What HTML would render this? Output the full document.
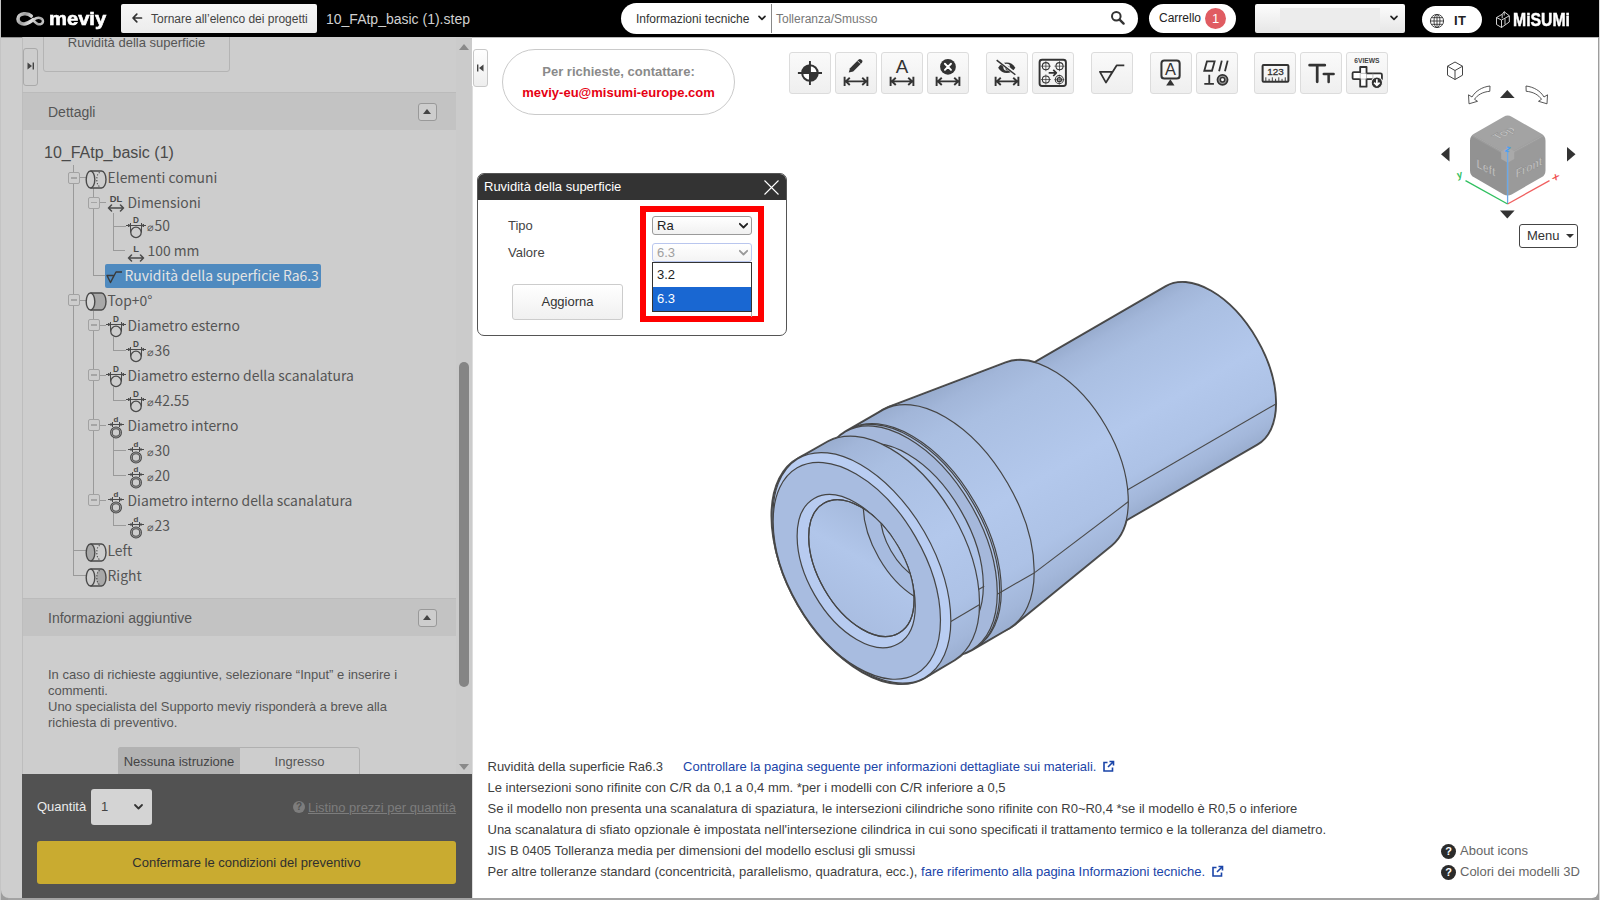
<!DOCTYPE html>
<html lang="it">
<head>
<meta charset="utf-8">
<title>meviy</title>
<style>
*{box-sizing:border-box;margin:0;padding:0}
html,body{width:1600px;height:900px;overflow:hidden;background:#9d9d9d}
body{font-family:"Liberation Sans",sans-serif;font-size:12px;color:#333;position:relative}
.abs{position:absolute}
#hdr{position:absolute;left:1px;top:0;width:1598px;height:37px;background:#000}
#hdr .t{position:absolute;white-space:nowrap}
#edgeL{position:absolute;left:0;top:0;width:1px;height:900px;background:#c4c4c4}
#edgeR{position:absolute;left:1598px;top:37px;width:1px;height:855px;background:#9d9d9d}
#edgeR2{position:absolute;left:1599px;top:0;width:1px;height:900px;background:#d8d8d8}
#edgeB{position:absolute;left:8px;top:898px;width:1584px;height:2px;background:#a3a3a3}
#strip{position:absolute;left:1px;top:37px;width:21px;height:861px;background:#cecece;border-bottom-left-radius:8px}
#left{z-index:2;position:absolute;left:22px;top:37px;width:450px;height:737px;background:#cdcdcd;overflow:hidden}
#foot{z-index:2;position:absolute;left:22px;top:774px;width:450px;height:124px;background:#525252}
#main{position:absolute;left:471px;top:37px;width:1127px;height:861px;background:#fff;border-bottom-right-radius:6px}
.tr{font-family:"Noto Sans CJK JP","Liberation Sans",sans-serif;line-height:20px;white-space:nowrap}
.sec{position:absolute;left:1px;width:434px;height:37px;background:#c3c3c3;color:#555;font-size:14px;line-height:38px;padding-left:25px}
.colbtn{position:absolute;left:395px;top:10px;width:19px;height:18px;border:1px solid #999;border-radius:3px;background:#cdcdcd}
.colbtn:after{content:"";position:absolute;left:4px;top:5px;border:4.5px solid transparent;border-bottom:5px solid #444;border-top:0}
.tb{position:absolute;top:15px;width:42px;height:42px;border:1px solid #dcdcdc;border-radius:3px;background:linear-gradient(#fafafa,#efefef)}
.tb svg{position:absolute;left:-1px;top:-1px}
.info{position:absolute;left:16.500px;white-space:nowrap;font-size:13px;color:#404040;line-height:14px}
.info a{color:#1a44a8;text-decoration:none}
</style>
</head>
<body>
<div id="edgeL"></div>
<div id="hdr">
<svg class="abs" style="left:14px;top:10px" width="32" height="18" viewBox="15 10 32 18">
<defs><linearGradient id="lg1" gradientUnits="userSpaceOnUse" x1="16" y1="12" x2="44" y2="26"><stop offset="0" stop-color="#e6e6e6"/><stop offset=".3" stop-color="#9c9c9c"/><stop offset=".55" stop-color="#e2e2e2"/><stop offset=".8" stop-color="#a8a8a8"/><stop offset="1" stop-color="#dcdcdc"/></linearGradient></defs>
<path d="M31.200 16C29.500 14.200 26.800 13.500 24 13.800C20.200 14.200 18 16.500 18 19C18 22 20.800 24.100 24.200 24C28 23.900 30.500 21.500 33.500 19.600" fill="none" stroke="url(#lg1)" stroke-width="3.600" stroke-linecap="round"/>
<path d="M33.500 19.600C36 18 38.600 17.500 40.600 18.200C42.900 19 43.400 21 42.600 22.600C41.600 24.500 39 24.800 37 23.600C35.800 22.900 34.800 22 34 21.200" fill="none" stroke="url(#lg1)" stroke-width="2.500" stroke-linecap="round"/>
</svg>
<div class="t" style="left:47.500px;top:5px;font-weight:bold;font-size:18px;line-height:28px;color:#fff;-webkit-text-stroke:.6px #fff;transform-origin:0 50%;transform:scaleX(1.120)">meviy</div>
<div class="abs" style="left:120px;top:4px;width:196px;height:29px;background:linear-gradient(#f6f6f6,#ececec);border-radius:2px"></div>
<svg class="abs" style="left:130px;top:12px" width="12" height="12" viewBox="0 0 12 12"><path d="M10.500 6H2.200M5.800 2.200L2 6l3.800 3.800" fill="none" stroke="#333" stroke-width="1.700" stroke-linecap="round" stroke-linejoin="round"/></svg>
<div class="t" style="left:150px;top:12px;font-size:12px;line-height:14px;color:#444">Tornare all’elenco dei progetti</div>
<div class="t" style="left:325px;top:11px;font-size:14px;line-height:16px;color:#d0d0d0">10_FAtp_basic (1).step</div>
<div class="abs" style="left:620px;top:3px;width:517px;height:31px;background:#fff;border-radius:16px"></div>
<div class="t" style="left:635px;top:12px;font-size:12px;line-height:14px;color:#333">Informazioni tecniche</div>
<svg class="abs" style="left:756px;top:14px" width="10" height="8" viewBox="0 0 10 8"><path d="M2 2.300l3 3 3-3" fill="none" stroke="#222" stroke-width="1.700" stroke-linecap="round" stroke-linejoin="round"/></svg>
<div class="abs" style="left:770px;top:4px;width:1px;height:29px;background:#888"></div>
<div class="t" style="left:775px;top:12px;font-size:12px;line-height:14px;color:#777">Tolleranza/Smusso</div>
<svg class="abs" style="left:1109px;top:10px" width="16" height="16" viewBox="0 0 16 16"><circle cx="6.300" cy="6.300" r="4.300" fill="none" stroke="#333" stroke-width="2"/><path d="M9.600 9.600l4 4" stroke="#333" stroke-width="2.400" stroke-linecap="round"/></svg>
<div class="abs" style="left:1148px;top:4px;width:87px;height:29px;background:#fff;border-radius:15px"></div>
<div class="t" style="left:1158px;top:11px;font-size:12px;line-height:14px;color:#222">Carrello</div>
<div class="abs" style="left:1204px;top:8px;width:21px;height:21px;border-radius:50%;background:#e05c62;color:#fff;font-size:13px;line-height:21px;text-align:center">1</div>
<div class="abs" style="left:1254px;top:4px;width:150px;height:29px;background:linear-gradient(#fdfdfd,#e6e6e6);border-radius:2px"></div>
<div class="abs" style="left:1279px;top:8px;width:100px;height:22px;background:#ececec"></div>
<svg class="abs" style="left:1388px;top:14px" width="10" height="8" viewBox="0 0 10 8"><path d="M2 2.300l3 3 3-3" fill="none" stroke="#222" stroke-width="1.700" stroke-linecap="round" stroke-linejoin="round"/></svg>
<div class="abs" style="left:1421px;top:6px;width:60px;height:27px;background:#fff;border-radius:14px"></div>
<svg class="abs" style="left:1428px;top:13px" width="16" height="16" viewBox="0 0 16 16"><g fill="none" stroke="#333" stroke-width=".9"><circle cx="8" cy="8" r="6.600"/><ellipse cx="8" cy="8" rx="3" ry="6.600"/><path d="M8 1.400v13.200M1.400 8h13.200M2.300 4.700h11.400M2.300 11.300h11.400"/></g></svg>
<div class="t" style="left:1453px;top:13px;font-size:13px;line-height:15px;font-weight:bold;color:#222;letter-spacing:.5px">IT</div>
<svg class="abs" style="left:1494px;top:10px" width="16" height="19" viewBox="0 0 16 19"><g fill="none" stroke="#e8e8e8" stroke-width=".9" stroke-linejoin="round"><path d="M1.500 7.500l5 2.600 7.800-4.300V12L6.500 17.500l-5-3z"/><path d="M6.500 10.100v7.400M7.200 4.300l2-2.600 5.100 4.100M7.200 4.300v4M9.200 1.700v3.800M1.500 7.500l5.700-3.200M10 8.500v6"/></g></svg>
<div class="t" style="left:1512px;top:9px;font-size:19px;line-height:22px;font-weight:bold;color:#fff;-webkit-text-stroke:.5px #fff;transform-origin:0 50%;transform:scaleX(.830)">MiSUMi</div>
</div>
<div id="strip"></div>
<div id="left">
<div class="abs" style="left:0;top:0;width:1px;height:737px;background:#bdbdbd"></div>
<div class="abs" style="left:1px;top:11px;width:15px;height:38px;border:1px solid #aaa;border-radius:3px;background:#cdcdcd"></div>
<svg class="abs" style="left:5px;top:25px" width="8" height="8" viewBox="0 0 8 8"><path d="M0.500 0.500L5 4 0.500 7.500z" fill="#444"/><path d="M6.300 0.500v7" stroke="#444" stroke-width="1.400"/></svg>
<div class="abs" style="left:21px;top:-6px;width:187px;height:41px;border:1px solid #b4b4b4;border-radius:3px;background:#cdcdcd"></div>
<div class="abs" style="left:21px;top:-2px;width:187px;text-align:center;font-size:13px;line-height:15px;color:#555">Ruvidità della superficie</div>
<div class="abs" style="left:0;top:55px;width:435px;height:1px;background:#bbb"></div>
<div class="sec" style="top:56px">Dettagli<div class="colbtn"></div></div>
<div class="abs" style="left:22px;top:106px;font-size:16px;line-height:20px;color:#4a4a4a;white-space:nowrap">10_FAtp_basic (1)</div>
<div class="abs" style="left:51px;top:128px;width:1px;height:410px;background:#9a9a9a"></div>
<div class="abs" style="left:51px;top:140px;width:13px;height:1px;background:#9a9a9a"></div>
<div class="abs" style="left:51px;top:263px;width:13px;height:1px;background:#9a9a9a"></div>
<div class="abs" style="left:51px;top:513px;width:13px;height:1px;background:#9a9a9a"></div>
<div class="abs" style="left:51px;top:538px;width:13px;height:1px;background:#9a9a9a"></div>
<div class="abs" style="left:71px;top:151px;width:1px;height:88px;background:#9a9a9a"></div>
<div class="abs" style="left:71px;top:165px;width:13px;height:1px;background:#9a9a9a"></div>
<div class="abs" style="left:71px;top:238px;width:13px;height:1px;background:#9a9a9a"></div>
<div class="abs" style="left:91px;top:176px;width:1px;height:38px;background:#9a9a9a"></div>
<div class="abs" style="left:91px;top:189px;width:13px;height:1px;background:#9a9a9a"></div>
<div class="abs" style="left:91px;top:213px;width:12px;height:1px;background:#9a9a9a"></div>
<div class="abs" style="left:71px;top:274px;width:1px;height:190px;background:#9a9a9a"></div>
<div class="abs" style="left:71px;top:288px;width:13px;height:1px;background:#9a9a9a"></div>
<div class="abs" style="left:71px;top:338px;width:13px;height:1px;background:#9a9a9a"></div>
<div class="abs" style="left:71px;top:388px;width:13px;height:1px;background:#9a9a9a"></div>
<div class="abs" style="left:71px;top:463px;width:13px;height:1px;background:#9a9a9a"></div>
<div class="abs" style="left:91px;top:300px;width:1px;height:14px;background:#9a9a9a"></div>
<div class="abs" style="left:91px;top:313px;width:13px;height:1px;background:#9a9a9a"></div>
<div class="abs" style="left:91px;top:350px;width:1px;height:14px;background:#9a9a9a"></div>
<div class="abs" style="left:91px;top:363px;width:13px;height:1px;background:#9a9a9a"></div>
<div class="abs" style="left:91px;top:400px;width:1px;height:39px;background:#9a9a9a"></div>
<div class="abs" style="left:91px;top:413px;width:13px;height:1px;background:#9a9a9a"></div>
<div class="abs" style="left:91px;top:438px;width:13px;height:1px;background:#9a9a9a"></div>
<div class="abs" style="left:91px;top:475px;width:1px;height:14px;background:#9a9a9a"></div>
<div class="abs" style="left:91px;top:488px;width:13px;height:1px;background:#9a9a9a"></div>
<div class="abs" style="left:83px;top:227px;width:216px;height:24px;background:#4f8abf;border-radius:2px"></div>
<div class="abs" style="left:46px;top:135px;width:12px;height:12px;border:1px solid #a2a2a2;border-radius:2px;background:#cdcdcd"><div class="abs" style="left:2px;top:4px;width:6px;height:1.5px;background:#a5a5a5"></div></div>
<div class="abs" style="left:66px;top:159.5px;width:12px;height:12px;border:1px solid #a2a2a2;border-radius:2px;background:#cdcdcd"><div class="abs" style="left:2px;top:4px;width:6px;height:1.5px;background:#a5a5a5"></div></div>
<div class="abs" style="left:46px;top:257px;width:12px;height:12px;border:1px solid #a2a2a2;border-radius:2px;background:#cdcdcd"><div class="abs" style="left:2px;top:4px;width:6px;height:1.5px;background:#a5a5a5"></div></div>
<div class="abs" style="left:66px;top:282px;width:12px;height:12px;border:1px solid #a2a2a2;border-radius:2px;background:#cdcdcd"><div class="abs" style="left:2px;top:4px;width:6px;height:1.5px;background:#a5a5a5"></div></div>
<div class="abs" style="left:66px;top:332px;width:12px;height:12px;border:1px solid #a2a2a2;border-radius:2px;background:#cdcdcd"><div class="abs" style="left:2px;top:4px;width:6px;height:1.5px;background:#a5a5a5"></div></div>
<div class="abs" style="left:66px;top:382px;width:12px;height:12px;border:1px solid #a2a2a2;border-radius:2px;background:#cdcdcd"><div class="abs" style="left:2px;top:4px;width:6px;height:1.5px;background:#a5a5a5"></div></div>
<div class="abs" style="left:66px;top:457px;width:12px;height:12px;border:1px solid #a2a2a2;border-radius:2px;background:#cdcdcd"><div class="abs" style="left:2px;top:4px;width:6px;height:1.5px;background:#a5a5a5"></div></div>
<svg class="abs" style="left:63px;top:132.5px" width="22" height="19" viewBox="0 0 22 19"><path d="M5.5 1H16.500a4.500 8.500 0 0 1 0 17H5.500" fill="none" stroke="#4a4a4a" stroke-width="1.400"/><ellipse cx="5.500" cy="9.500" rx="4.300" ry="8.500" fill="none" stroke="#4a4a4a" stroke-width="1.400"/><path d="M14.800 2.500a3 7 0 0 0 0 14" fill="none" stroke="#4a4a4a" stroke-width="1.100" stroke-dasharray="1.200 1.700"/></svg>
<div class="abs tr" style="left:85.5px;top:130px;color:#555;font-size:13.9px;">Elementi comuni</div>
<svg class="abs" style="left:85px;top:157px" width="18" height="18" viewBox="0 0 18 18"><text x="9" y="7.500" font-family="Liberation Sans,sans-serif" font-weight="bold" font-size="9.300" text-anchor="middle" fill="#4a4a4a">DL</text><path d="M1.500 14H16.500M4.500 11l-3 3 3 3M13.500 11l3 3-3 3" fill="none" stroke="#4a4a4a" stroke-width="1.500" stroke-linejoin="round" stroke-linecap="round"/></svg>
<div class="abs tr" style="left:105.5px;top:154.5px;color:#555;font-size:13.9px;">Dimensioni</div>
<svg class="abs" style="left:104px;top:180.0px" width="20" height="22" viewBox="0 0 20 22"><text x="10" y="6" font-family="Liberation Sans,sans-serif" font-weight="bold" font-size="8.200" text-anchor="middle" fill="#4a4a4a">D</text><path d="M0 8.500H20M4.500 6v9.500M15.500 6v9.500M2 7.300l2.500 1.200-2.500 1.200M18 7.300l-2.500 1.200 2.500 1.200" fill="none" stroke="#4a4a4a" stroke-width="1"/><circle cx="10" cy="15.400" r="5.200" fill="none" stroke="#4a4a4a" stroke-width="1.300"/></svg>
<div class="abs tr" style="left:124.5px;top:178px;color:#555;font-size:13.9px;"><span style="font-size:10.500px;margin-right:1px">⌀</span>50</div>
<svg class="abs" style="left:105px;top:207px" width="18" height="18" viewBox="0 0 18 18"><text x="9" y="7.500" font-family="Liberation Sans,sans-serif" font-weight="bold" font-size="9.300" text-anchor="middle" fill="#4a4a4a">L</text><path d="M1.500 14H16.500M4.500 11l-3 3 3 3M13.500 11l3 3-3 3" fill="none" stroke="#4a4a4a" stroke-width="1.500" stroke-linejoin="round" stroke-linecap="round"/></svg>
<div class="abs tr" style="left:125.5px;top:202.5px;color:#555;font-size:13.9px;">100 mm</div>
<svg class="abs" style="left:84px;top:233px" width="17" height="15" viewBox="0 0 17 15"><path d="M1 5.500h7L4.500 12.500zM4.500 12.500L10 2h6" fill="none" stroke="#3a3a3a" stroke-width="1.400" stroke-linejoin="round"/></svg>
<div class="abs tr" style="left:102.5px;top:227.5px;color:#e4e4e4;font-size:13.9px;">Ruvidità della superficie Ra6.3</div>
<svg class="abs" style="left:63px;top:254.5px" width="22" height="19" viewBox="0 0 22 19"><path d="M5.5 1H16.500a4.500 8.500 0 0 1 0 17H5.500" fill="#a8a8a8" stroke="#4a4a4a" stroke-width="1.400"/><ellipse cx="5.500" cy="9.500" rx="4.300" ry="8.500" fill="#d6d6d6" stroke="#4a4a4a" stroke-width="1.400"/></svg>
<div class="abs tr" style="left:85.5px;top:252.5px;color:#555;font-size:13.9px;">Top+0°</div>
<svg class="abs" style="left:84px;top:279.0px" width="20" height="22" viewBox="0 0 20 22"><text x="10" y="6" font-family="Liberation Sans,sans-serif" font-weight="bold" font-size="8.200" text-anchor="middle" fill="#4a4a4a">D</text><path d="M0 8.500H20M4.500 6v9.500M15.500 6v9.500M2 7.300l2.500 1.200-2.500 1.200M18 7.300l-2.500 1.200 2.500 1.200" fill="none" stroke="#4a4a4a" stroke-width="1"/><circle cx="10" cy="15.400" r="5.200" fill="none" stroke="#4a4a4a" stroke-width="1.300"/></svg>
<div class="abs tr" style="left:105.5px;top:277.5px;color:#555;font-size:13.9px;">Diametro esterno</div>
<svg class="abs" style="left:104px;top:304.0px" width="20" height="22" viewBox="0 0 20 22"><text x="10" y="6" font-family="Liberation Sans,sans-serif" font-weight="bold" font-size="8.200" text-anchor="middle" fill="#4a4a4a">D</text><path d="M0 8.500H20M4.500 6v9.500M15.500 6v9.500M2 7.300l2.500 1.200-2.500 1.200M18 7.300l-2.500 1.200 2.500 1.200" fill="none" stroke="#4a4a4a" stroke-width="1"/><circle cx="10" cy="15.400" r="5.200" fill="none" stroke="#4a4a4a" stroke-width="1.300"/></svg>
<div class="abs tr" style="left:124.5px;top:302.5px;color:#555;font-size:13.9px;"><span style="font-size:10.500px;margin-right:1px">⌀</span>36</div>
<svg class="abs" style="left:84px;top:329.0px" width="20" height="22" viewBox="0 0 20 22"><text x="10" y="6" font-family="Liberation Sans,sans-serif" font-weight="bold" font-size="8.200" text-anchor="middle" fill="#4a4a4a">D</text><path d="M0 8.500H20M4.500 6v9.500M15.500 6v9.500M2 7.300l2.500 1.200-2.500 1.200M18 7.300l-2.500 1.200 2.500 1.200" fill="none" stroke="#4a4a4a" stroke-width="1"/><circle cx="10" cy="15.400" r="5.200" fill="none" stroke="#4a4a4a" stroke-width="1.300"/></svg>
<div class="abs tr" style="left:105.5px;top:327.5px;color:#555;font-size:13.9px;">Diametro esterno della scanalatura</div>
<svg class="abs" style="left:104px;top:354.0px" width="20" height="22" viewBox="0 0 20 22"><text x="10" y="6" font-family="Liberation Sans,sans-serif" font-weight="bold" font-size="8.200" text-anchor="middle" fill="#4a4a4a">D</text><path d="M0 8.500H20M4.500 6v9.500M15.500 6v9.500M2 7.300l2.500 1.200-2.500 1.200M18 7.300l-2.500 1.200 2.500 1.200" fill="none" stroke="#4a4a4a" stroke-width="1"/><circle cx="10" cy="15.400" r="5.200" fill="none" stroke="#4a4a4a" stroke-width="1.300"/></svg>
<div class="abs tr" style="left:124.5px;top:352.5px;color:#555;font-size:13.9px;"><span style="font-size:10.500px;margin-right:1px">⌀</span>42.55</div>
<svg class="abs" style="left:86px;top:379px" width="16" height="23" viewBox="0 0 16 23"><text x="8" y="5.500" font-family="Liberation Sans,sans-serif" font-weight="bold" font-size="8" text-anchor="middle" fill="#4a4a4a">d</text><path d="M0 8.500H16M4.500 6v5M11.500 6v5M2.500 7.500l2 1-2 1M13.500 7.500l-2 1 2 1" fill="none" stroke="#4a4a4a" stroke-width="1"/><circle cx="8" cy="16.500" r="4.600" fill="none" stroke="#4a4a4a" stroke-width="2.800"/><circle cx="8" cy="16.500" r="4.600" fill="none" stroke="#b5b5b5" stroke-width=".7"/></svg>
<div class="abs tr" style="left:105.5px;top:377.5px;color:#555;font-size:13.9px;">Diametro interno</div>
<svg class="abs" style="left:106px;top:404px" width="16" height="23" viewBox="0 0 16 23"><text x="8" y="5.500" font-family="Liberation Sans,sans-serif" font-weight="bold" font-size="8" text-anchor="middle" fill="#4a4a4a">d</text><path d="M0 8.500H16M4.500 6v5M11.500 6v5M2.500 7.500l2 1-2 1M13.500 7.500l-2 1 2 1" fill="none" stroke="#4a4a4a" stroke-width="1"/><circle cx="8" cy="16.500" r="4.600" fill="none" stroke="#4a4a4a" stroke-width="2.800"/><circle cx="8" cy="16.500" r="4.600" fill="none" stroke="#b5b5b5" stroke-width=".7"/></svg>
<div class="abs tr" style="left:124.5px;top:402.5px;color:#555;font-size:13.9px;"><span style="font-size:10.500px;margin-right:1px">⌀</span>30</div>
<svg class="abs" style="left:106px;top:429px" width="16" height="23" viewBox="0 0 16 23"><text x="8" y="5.500" font-family="Liberation Sans,sans-serif" font-weight="bold" font-size="8" text-anchor="middle" fill="#4a4a4a">d</text><path d="M0 8.500H16M4.500 6v5M11.500 6v5M2.500 7.500l2 1-2 1M13.500 7.500l-2 1 2 1" fill="none" stroke="#4a4a4a" stroke-width="1"/><circle cx="8" cy="16.500" r="4.600" fill="none" stroke="#4a4a4a" stroke-width="2.800"/><circle cx="8" cy="16.500" r="4.600" fill="none" stroke="#b5b5b5" stroke-width=".7"/></svg>
<div class="abs tr" style="left:124.5px;top:427.5px;color:#555;font-size:13.9px;"><span style="font-size:10.500px;margin-right:1px">⌀</span>20</div>
<svg class="abs" style="left:86px;top:454px" width="16" height="23" viewBox="0 0 16 23"><text x="8" y="5.500" font-family="Liberation Sans,sans-serif" font-weight="bold" font-size="8" text-anchor="middle" fill="#4a4a4a">d</text><path d="M0 8.500H16M4.500 6v5M11.500 6v5M2.500 7.500l2 1-2 1M13.500 7.500l-2 1 2 1" fill="none" stroke="#4a4a4a" stroke-width="1"/><circle cx="8" cy="16.500" r="4.600" fill="none" stroke="#4a4a4a" stroke-width="2.800"/><circle cx="8" cy="16.500" r="4.600" fill="none" stroke="#b5b5b5" stroke-width=".7"/></svg>
<div class="abs tr" style="left:105.5px;top:452.5px;color:#555;font-size:13.9px;">Diametro interno della scanalatura</div>
<svg class="abs" style="left:106px;top:479px" width="16" height="23" viewBox="0 0 16 23"><text x="8" y="5.500" font-family="Liberation Sans,sans-serif" font-weight="bold" font-size="8" text-anchor="middle" fill="#4a4a4a">d</text><path d="M0 8.500H16M4.500 6v5M11.500 6v5M2.500 7.500l2 1-2 1M13.500 7.500l-2 1 2 1" fill="none" stroke="#4a4a4a" stroke-width="1"/><circle cx="8" cy="16.500" r="4.600" fill="none" stroke="#4a4a4a" stroke-width="2.800"/><circle cx="8" cy="16.500" r="4.600" fill="none" stroke="#b5b5b5" stroke-width=".7"/></svg>
<div class="abs tr" style="left:124.5px;top:477.5px;color:#555;font-size:13.9px;"><span style="font-size:10.500px;margin-right:1px">⌀</span>23</div>
<svg class="abs" style="left:63px;top:505.5px" width="22" height="19" viewBox="0 0 22 19"><path d="M5.5 1H16.500a4.500 8.500 0 0 1 0 17H5.500" fill="none" stroke="#4a4a4a" stroke-width="1.400"/><ellipse cx="5.500" cy="9.500" rx="4.300" ry="8.500" fill="#a8a8a8" stroke="#4a4a4a" stroke-width="1.400"/><path d="M14.800 2.500a3 7 0 0 0 0 14" fill="none" stroke="#4a4a4a" stroke-width="1.100" stroke-dasharray="1.200 1.700"/></svg>
<div class="abs tr" style="left:85.5px;top:502.5px;color:#555;font-size:13.9px;">Left</div>
<svg class="abs" style="left:63px;top:530.5px" width="22" height="19" viewBox="0 0 22 19"><path d="M14.500 1.500H16.500a4.500 8 0 0 1 0 16H14.500a3.200 8 0 0 1 0-16z" fill="#a8a8a8"/><path d="M5.5 1H16.500a4.500 8.500 0 0 1 0 17H5.500" fill="none" stroke="#4a4a4a" stroke-width="1.400"/><ellipse cx="5.500" cy="9.500" rx="4.300" ry="8.500" fill="none" stroke="#4a4a4a" stroke-width="1.400"/><path d="M14.800 2.500a3 7 0 0 0 0 14" fill="none" stroke="#4a4a4a" stroke-width="1.100" stroke-dasharray="1.200 1.700"/></svg>
<div class="abs tr" style="left:85.5px;top:527.5px;color:#555;font-size:13.9px;">Right</div>
<div class="abs" style="left:0;top:561px;width:435px;height:1px;background:#bbb"></div>
<div class="sec" style="top:562px">Informazioni aggiuntive<div class="colbtn"></div></div>
<div class="abs" style="left:26px;top:630px;width:400px;font-size:13px;line-height:16px;color:#555">In caso di richieste aggiuntive, selezionare “Input” e inserire i<br>commenti.<br>Uno specialista del Supporto meviy risponderà a breve alla<br>richiesta di preventivo.</div>
<div class="abs" style="left:96px;top:710px;width:242px;height:30px;border:1px solid #b0b0b0;border-radius:3px;background:#cdcdcd"></div>
<div class="abs" style="left:96px;top:710px;width:122px;height:30px;background:#b2b2b2;border-radius:3px 0 0 0;font-size:13px;line-height:29px;text-align:center;color:#444">Nessuna istruzione</div>
<div class="abs" style="left:218px;top:711px;width:119px;height:30px;font-size:13px;line-height:27px;text-align:center;color:#555">Ingresso</div>
<div class="abs" style="left:434px;top:0;width:16px;height:737px;background:#cbcbcb"></div>
<div class="abs" style="left:437px;top:325px;width:10px;height:325px;background:#858585;border-radius:5px"></div>
<div class="abs" style="left:437px;top:7px;border:5px solid transparent;border-bottom:6px solid #8a8a8a;border-top:0"></div>
<div class="abs" style="left:437px;top:727px;border:5px solid transparent;border-top:6px solid #8a8a8a;border-bottom:0"></div>
</div>
<div id="foot">
<div class="abs" style="left:15px;top:25px;font-size:13px;line-height:15px;color:#ececec;white-space:nowrap">Quantità</div>
<div class="abs" style="left:69px;top:15px;width:61px;height:36px;background:#d4d4d4;border-radius:3px"></div>
<div class="abs" style="left:79px;top:25px;font-size:13px;line-height:15px;color:#444">1</div>
<svg class="abs" style="left:111px;top:29px" width="11" height="8" viewBox="0 0 11 8"><path d="M2 2l3.500 3.500L9 2" fill="none" stroke="#333" stroke-width="1.800" stroke-linecap="round" stroke-linejoin="round"/></svg>
<div class="abs" style="left:271px;top:27px;width:12px;height:12px;border-radius:50%;background:#7d7d7d;color:#525252;font-size:10px;line-height:12px;font-weight:bold;text-align:center">?</div>
<div class="abs" style="left:286px;top:26px;font-size:13px;line-height:15px;color:#7d7d7d;text-decoration:underline;white-space:nowrap;letter-spacing:-0.01px">Listino prezzi per quantità</div>
<div class="abs" style="left:15px;top:67px;width:419px;height:43px;background:#c9ab30;border-radius:3px;font-size:13px;line-height:43px;text-align:center;color:#2f2f2f">Confermare le condizioni del preventivo</div>
</div>
<div id="main">
<!--MODEL--><svg class="abs" style="left:0;top:0" width="1126" height="861" viewBox="0 0 1126 861"><defs>
<linearGradient id="mg" gradientUnits="userSpaceOnUse" x1="421.6" y1="365.1" x2="549.9" y2="586.7">
<stop offset="0" stop-color="#98acce"/><stop offset=".07" stop-color="#a2b6d9"/><stop offset=".2" stop-color="#aabfe2"/><stop offset=".55" stop-color="#b3c8ec"/><stop offset=".8" stop-color="#adc2e6"/><stop offset=".93" stop-color="#a3b7da"/><stop offset="1" stop-color="#9aaed0"/></linearGradient>
<linearGradient id="hg" gradientUnits="userSpaceOnUse" x1="346.4" y1="468.8" x2="422.6" y2="600.3">
<stop offset="0" stop-color="#9fb3d6"/><stop offset=".45" stop-color="#b1c6ea"/><stop offset="1" stop-color="#a6bade"/></linearGradient>
<clipPath id="hc"><ellipse cx="390.4" cy="531.1" rx="75.0" ry="42.7" transform="rotate(59.93 390.4 531.1)" /></clipPath>
<linearGradient id="mg1" gradientUnits="userSpaceOnUse" x1="440.1" y1="397.0" x2="531.5" y2="554.8"><stop offset="0" stop-color="#98acce"/><stop offset=".07" stop-color="#a2b6d9"/><stop offset=".2" stop-color="#aabfe2"/><stop offset=".55" stop-color="#b3c8ec"/><stop offset=".8" stop-color="#adc2e6"/><stop offset=".93" stop-color="#a3b7da"/><stop offset="1" stop-color="#9aaed0"/></linearGradient><linearGradient id="mg2" gradientUnits="userSpaceOnUse" x1="426.7" y1="373.8" x2="544.9" y2="578.0"><stop offset="0" stop-color="#98acce"/><stop offset=".07" stop-color="#a2b6d9"/><stop offset=".2" stop-color="#aabfe2"/><stop offset=".55" stop-color="#b3c8ec"/><stop offset=".8" stop-color="#adc2e6"/><stop offset=".93" stop-color="#a3b7da"/><stop offset="1" stop-color="#9aaed0"/></linearGradient></defs>
<path d="M786.3 407.3A91.2 52.0 59.93 0 0 694.9 249.4L537.0 340.9A91.2 52.0 59.93 1 0 628.4 498.7Z" fill="#a9bde0" stroke="#555" stroke-width="2.6" stroke-linejoin="round"/>
<path d="M640.4 508.4A106.0 60.4 59.93 0 0 534.6 325.7L418.2 370.0A126.0 71.8 59.93 1 0 544.0 587.2Z" fill="#a9bde0" stroke="#555" stroke-width="2.6" stroke-linejoin="round"/>
<path d="M538.5 591.0A126.0 71.8 59.93 0 0 412.3 372.9L374.6 394.7A126.0 71.8 59.93 1 0 500.9 612.8Z" fill="#a9bde0" stroke="#555" stroke-width="2.6" stroke-linejoin="round"/>
<path d="M483.6 623.0A126.2 71.9 59.93 0 0 357.1 404.6L327.9 421.2A126.5 72.1 59.93 1 0 454.6 640.1Z" fill="#a9bde0" stroke="#555" stroke-width="2.6" stroke-linejoin="round"/>
<path d="M389.4 632.5A126.5 72.1 59.93 1 0 302.0 481.6L302.2 487.4A119.0 67.8 59.93 0 0 384.4 629.4Z" fill="#a9bde0" stroke="#555" stroke-width="2.6" stroke-linejoin="round"/>
<ellipse cx="385.8" cy="533.8" rx="119.0" ry="67.8" transform="rotate(59.93 385.8 533.8)" fill="#a9bde0" stroke="#555" stroke-width="2.6" />
<path d="M786.3 407.3A91.2 52.0 59.93 0 0 694.9 249.4L537.0 340.9A91.2 52.0 59.93 1 0 628.4 498.7Z" fill="url(#mg1)" stroke="#454545" stroke-width="1.2" stroke-linejoin="round"/>
<path d="M804.8 367.0L646.8 458.5" stroke="#4a4a4a" stroke-width="1.1" fill="none"/>
<path d="M640.4 508.4A106.0 60.4 59.93 0 0 534.6 325.7L418.2 370.0A126.0 71.8 59.93 1 0 544.0 587.2Z" fill="url(#mg2)" stroke="#454545" stroke-width="1.2" stroke-linejoin="round"/>
<path d="M657.2 464.8L564.0 535.4" stroke="#4a4a4a" stroke-width="1.1" fill="none"/>
<path d="M538.5 591.0A126.0 71.8 59.93 0 0 412.3 372.9L379.4 391.9A126.0 71.8 59.93 1 0 505.6 610.0Z" fill="url(#mg)" stroke="#454545" stroke-width="1.2" stroke-linejoin="round"/>
<path d="M505.6 610.0A126.0 71.8 59.93 0 0 379.4 391.9L377.0 393.3A126.0 71.8 59.93 1 0 503.3 611.4Z" fill="url(#mg)" stroke="#454545" stroke-width="1.2" stroke-linejoin="round"/>
<path d="M503.3 611.4A126.0 71.8 59.93 0 0 377.0 393.3L374.6 394.7A126.0 71.8 59.93 1 0 500.9 612.8Z" fill="url(#mg)" stroke="#454545" stroke-width="1.2" stroke-linejoin="round"/>
<path d="M564.0 535.4L526.3 557.2" stroke="#4a4a4a" stroke-width="1.1" fill="none"/>
<ellipse cx="437.7" cy="503.7" rx="126.0" ry="71.8" transform="rotate(59.93 437.7 503.7)" fill="#a5b8db" stroke="#454545" stroke-width="1.2" />
<path d="M491.5 596.6A107.3 61.2 59.93 0 0 384.0 410.9L366.2 421.1A107.3 61.2 59.93 1 0 473.8 606.9Z" fill="#afc4e8" stroke="#454545" stroke-width="1.2" stroke-linejoin="round"/>
<path d="M513.2 549.2L495.4 559.5" stroke="#4a4a4a" stroke-width="1.1" fill="none"/>
<path d="M483.6 623.0A126.2 71.9 59.93 0 0 357.1 404.6L327.9 421.2A126.5 72.1 59.93 1 0 454.6 640.1Z" fill="url(#mg)" stroke="#454545" stroke-width="1.2" stroke-linejoin="round"/>
<path d="M508.7 567.5L479.9 584.5" stroke="#4a4a4a" stroke-width="1.1" fill="none"/>
<path d="M389.4 632.5A126.5 72.1 59.93 1 0 302.0 481.6L302.2 487.4A119.0 67.8 59.93 0 0 384.4 629.4Z" fill="#b9cdf2" stroke="#454545" stroke-width="1.2" stroke-linejoin="round"/>
<ellipse cx="385.8" cy="533.8" rx="119.0" ry="67.8" transform="rotate(59.93 385.8 533.8)" fill="#a8bce0" stroke="#454545" stroke-width="1.2" />
<ellipse cx="385.2" cy="534.1" rx="84.0" ry="47.9" transform="rotate(59.93 385.2 534.1)" fill="#b7cbf0" stroke="#454545" stroke-width="1.2" />
<ellipse cx="390.4" cy="531.1" rx="75.0" ry="42.7" transform="rotate(59.93 390.4 531.1)" fill="url(#hg)" stroke="#454545" stroke-width="1.2" />
<g clip-path="url(#hc)"><ellipse cx="444.9" cy="499.6" rx="75.0" ry="42.7" transform="rotate(59.93 444.9 499.6)" fill="#a7bbdf" stroke="#454545" stroke-width="1.2" /><ellipse cx="444.9" cy="499.6" rx="50.4" ry="28.7" transform="rotate(59.93 444.9 499.6)" fill="url(#hg)" stroke="#454545" stroke-width="1.2" /></g>
<ellipse cx="390.4" cy="531.1" rx="75.0" ry="42.7" transform="rotate(59.93 390.4 531.1)" fill="none" stroke="#454545" stroke-width="1.2" /></svg><!--/MODEL-->
<div class="abs" style="left:2px;top:12px;width:15px;height:38px;border:1px solid #c8c8c8;border-radius:3px;background:linear-gradient(#fff,#eee)"></div>
<svg class="abs" style="left:5px;top:27px" width="8" height="8" viewBox="0 0 8 8"><path d="M7.500 0.500L3 4l4.500 3.500z" fill="#444"/><path d="M1.700 0.500v7" stroke="#444" stroke-width="1.400"/></svg>
<div class="abs" style="left:31px;top:12px;width:233px;height:66px;border:1px solid #cacaca;border-radius:33px;background:#fff;text-align:center;font-weight:bold;font-size:13px;line-height:15px"><div class="abs" style="left:0;top:14px;width:231px;color:#8a8a8a">Per richieste, contattare:</div><div class="abs" style="left:0;top:35px;width:231px;color:#e60012">meviy-eu@misumi-europe.com</div></div>
<div class="tb" style="left:318px"><svg width="42" height="42" viewBox="0 0 41.5 41.5"><circle cx="20.700" cy="20.700" r="7.700" fill="#fff" stroke="#333" stroke-width="2"/><path d="M20.700 20.700V13a7.700 7.700 0 0 0-7.700 7.700zM20.700 20.700v7.700a7.700 7.700 0 0 0 7.700-7.700z" fill="#333"/><path d="M8.800 20.700h23.800M20.700 8.800v23.800" stroke="#333" stroke-width="1.900"/></svg></div>
<div class="tb" style="left:364px"><svg width="42" height="42" viewBox="0 0 41.5 41.5"><path d="M13.600 20.200l1.200-4.200 8.600-8.600a1.800 1.800 0 0 1 2.500 0l0.700 0.700a1.800 1.800 0 0 1 0 2.500l-8.600 8.600z" fill="#333"/><path d="M22.300 8.700l2.800 2.800" stroke="#f4f4f4" stroke-width=".8"/><path d="M9.500 24.500v9M32 24.500v9M10.500 29H31M14.600 25.400l-3.900 3.600 3.900 3.600M26.900 25.400l3.900 3.600-3.900 3.600" fill="none" stroke="#333" stroke-width="1.900" stroke-linejoin="round"/></svg></div>
<div class="tb" style="left:410px"><svg width="42" height="42" viewBox="0 0 41.5 41.5"><text x="20.700" y="20.300" font-family="Liberation Sans,sans-serif" font-size="18.500" text-anchor="middle" fill="#333">A</text><path d="M9.500 24.500v9M32 24.500v9M10.500 29H31M14.600 25.400l-3.900 3.600 3.900 3.600M26.900 25.400l3.900 3.600-3.900 3.600" fill="none" stroke="#333" stroke-width="1.900" stroke-linejoin="round"/></svg></div>
<div class="tb" style="left:456px"><svg width="42" height="42" viewBox="0 0 41.5 41.5"><circle cx="20.700" cy="14.600" r="7.800" fill="#333"/><path d="M17.700 11.600l6 6M23.700 11.600l-6 6" stroke="#fff" stroke-width="1.900" stroke-linecap="round"/><path d="M9.500 24.500v9M32 24.500v9M10.500 29H31M14.600 25.400l-3.900 3.600 3.900 3.600M26.900 25.400l3.900 3.600-3.900 3.600" fill="none" stroke="#333" stroke-width="1.900" stroke-linejoin="round"/></svg></div>
<div class="tb" style="left:515px"><svg width="42" height="42" viewBox="0 0 41.5 41.5"><path d="M12 15.500c2-3.500 5-5.200 8.500-5.200s6.500 1.700 8.500 5.200c-2 3.500-5 5.200-8.500 5.200s-6.500-1.700-8.500-5.200z" fill="#333"/><circle cx="20.500" cy="15" r="3.300" fill="#f6f6f6"/><circle cx="21.300" cy="15.800" r="2.300" fill="#333"/><path d="M11 7.500l18.500 14.500" stroke="#f6f6f6" stroke-width="3.400"/><path d="M10.500 8l18.500 14.500" stroke="#333" stroke-width="1.500"/><path d="M9.500 24.500v9M32 24.500v9M10.500 29H31M14.600 25.400l-3.900 3.600 3.900 3.600M26.900 25.400l3.900 3.600-3.900 3.600" fill="none" stroke="#333" stroke-width="1.900" stroke-linejoin="round"/></svg></div>
<div class="tb" style="left:561px"><svg width="42" height="42" viewBox="0 0 41.5 41.5"><rect x="7.500" y="7.600" width="26" height="26" rx="2.500" fill="none" stroke="#333" stroke-width="1.900"/><circle cx="13.7" cy="14" r="3.500" fill="none" stroke="#333" stroke-width="1"/><path d="M8.7 14h10M13.7 9v10" stroke="#333" stroke-width=".7"/><circle cx="27.2" cy="14" r="3.500" fill="none" stroke="#333" stroke-width="1"/><path d="M22.2 14h10M27.2 9v10" stroke="#333" stroke-width=".7"/><circle cx="13.7" cy="27.2" r="3.500" fill="none" stroke="#333" stroke-width="1"/><path d="M8.7 27.2h10M13.7 22.2v10" stroke="#333" stroke-width=".7"/><circle cx="27" cy="27.300" r="4" fill="none" stroke="#333" stroke-width="1"/><circle cx="27" cy="27.300" r="2" fill="none" stroke="#333" stroke-width="1.300"/><path d="M22 27.300h10M27 22.300v10" stroke="#333" stroke-width=".6"/><path d="M16.500 20.700h7M21 17.700l3 3-3 3" fill="none" stroke="#333" stroke-width="1.700" stroke-linejoin="round"/></svg></div>
<div class="tb" style="left:620px"><svg width="42" height="42" viewBox="0 0 41.5 41.5"><path d="M8.800 19.600h12.200L14.800 30.200zM14.800 30.200L25.300 13.300h7.600" fill="none" stroke="#333" stroke-width="1.700" stroke-linejoin="round"/></svg></div>
<div class="tb" style="left:679px"><svg width="42" height="42" viewBox="0 0 41.5 41.5"><rect x="11.300" y="8.500" width="18" height="17.700" rx="2.800" fill="none" stroke="#333" stroke-width="2"/><text x="20.200" y="23.100" font-family="Liberation Sans,sans-serif" font-size="16.200" text-anchor="middle" fill="#333">A</text><path d="M20.100 27l4.100 6.100h-8.200z" fill="#333"/></svg></div>
<div class="tb" style="left:725px"><svg width="42" height="42" viewBox="0 0 41.5 41.5"><path d="M10.800 9.300h7.600l-2.600 9.200h-7.600zM25.500 8.500l-2.700 10.500M31.300 8.500l-2.700 10.500M8.200 31.500h9.500M13.100 22.400v9" fill="none" stroke="#333" stroke-width="1.800"/><circle cx="26.200" cy="27.500" r="5" fill="#999" stroke="#333" stroke-width="1.700"/><circle cx="26.200" cy="27.500" r="2.200" fill="#fff" stroke="#333" stroke-width="1.500"/></svg></div>
<div class="tb" style="left:783px"><svg width="42" height="42" viewBox="0 0 41.5 41.5"><rect x="8.500" y="12.800" width="25.500" height="16.500" rx="1" fill="none" stroke="#333" stroke-width="2"/><text x="21.300" y="22.600" font-family="Liberation Sans,sans-serif" font-size="9.800" text-anchor="middle" fill="#333" stroke="#333" stroke-width=".3">123</text><path d="M11.700 25v4M14.900 26.500v3M18.100 25v4M21.300 26.500v3M24.500 25v4M27.700 26.500v3M30.900 25v4" stroke="#333" stroke-width=".9"/></svg></div>
<div class="tb" style="left:829px"><svg width="42" height="42" viewBox="0 0 41.5 41.5"><path d="M9.500 13h15M17 13v16.500" fill="none" stroke="#333" stroke-width="2.700" stroke-linecap="round"/><path d="M23.500 21.700h9.700M28.300 21.700v8" fill="none" stroke="#333" stroke-width="2.500" stroke-linecap="round"/></svg></div>
<div class="tb" style="left:875px"><svg width="42" height="42" viewBox="0 0 41.5 41.5"><text x="20.600" y="10.800" font-family="Liberation Sans,sans-serif" font-size="6.800" font-weight="bold" text-anchor="middle" fill="#444" textLength="25" lengthAdjust="spacingAndGlyphs">6VIEWS</text><path d="M14 14.800h6.300v6.300h13.700a1.500 1.500 0 0 1 1.500 1.500v4.200h-15.200v7.500h-6.300v-7.500h-6.300a1.200 1.200 0 0 1 -1.200-1.200v-4.500a1.200 1.200 0 0 1 1.200-1.200h6.300z" fill="#fff" stroke="#333" stroke-width="1.800" stroke-linejoin="round"/><path d="M14 21.100h6.300M14 26.800h6.300M14 21.100v5.700M20.300 21.100v5.700M26.600 21.100v5.700" stroke="#999" stroke-width=".6"/><circle cx="30.500" cy="30.400" r="5.600" fill="#333" stroke="#f4f4f4" stroke-width="1"/><path d="M30.500 27v5.500M27.800 30.300l2.700 2.700 2.700-2.700" fill="none" stroke="#fff" stroke-width="1.700"/></svg></div>
<!--MAIN2-->
<div class="abs" style="left:1px;top:49px;width:1px;height:812px;background:#dedede"></div>
<svg class="abs" style="left:964px;top:18px" width="150" height="170" viewBox="1435 55 150 170">
<g fill="none" stroke="#444" stroke-width="1" stroke-linejoin="round"><path d="M1455 62l7.500 4.200v9l-7.500 4.300-7.500-4.300v-9zM1447.500 66.200l7.500 4.300 7.500-4.300M1455 70.500v9"/></g>
<path d="M1500 98l7.300-8 7.300 8z" fill="#333"/><path d="M1500 210.500h14.600l-7.300 8z" fill="#333"/>
<path d="M1449.500 147v14.500l-8.500-7.250z" fill="#333"/><path d="M1567 147v14.500l8.500-7.250z" fill="#333"/>
<path d="M1490 86c-8 1-14.500 5-18 11l-3.500-2.200 0.500 9 8.500-2.500-3-2c3-4.500 8.500-7.500 15.300-8z" fill="#fff" stroke="#444" stroke-width=".9" stroke-linejoin="round"/>
<path d="M1526 86c8 1 14.500 5 18 11l3.500-2.200-0.500 9-8.500-2.500 3-2c-3-4.500-8.500-7.500-15.300-8z" fill="#fff" stroke="#444" stroke-width=".9" stroke-linejoin="round"/>
<mask id="cm" maskUnits="userSpaceOnUse" x="1435" y="55" width="150" height="170"><path d="M1507.700 123.700L1537.500 140.800V170.400L1507.700 187.500 1478 170.400V140.800z" fill="#fff" stroke="#fff" stroke-width="16" stroke-linejoin="round"/></mask>
<g mask="url(#cm)">
<path d="M1507.700 155.100L1420 105V60H1600V105z" fill="#a3a3a3"/>
<path d="M1507.700 155.100L1420 105V230H1507.700z" fill="#929292"/>
<path d="M1507.700 155.100L1600 105V230H1507.700z" fill="#9a9a9a"/>
<path d="M1507.700 155.100L1470 134M1507.700 155.100L1545.500 134M1507.700 155.100V197" stroke="#a0a0a0" stroke-width="2.500" opacity=".7"/>
</g>
<path d="M1507.700 147.500l6.500 3.800v7.600l-6.500 3.800-6.500-3.800v-7.600z" fill="#a9a9a9"/>
<g font-family="Liberation Sans,sans-serif" font-weight="bold" fill="#c6c6c6" stroke="#858585" stroke-width=".4" text-anchor="middle">
<text font-size="12" transform="translate(1507 135) rotate(-30) skewX(30) scale(1 .86)">Top</text>
<text font-size="11.500" transform="translate(1486 172) skewY(27) scale(.9 1.100)">Left</text>
<text font-size="11.500" transform="translate(1529 171.500) skewY(-27) scale(.9 1.100)">Front</text>
</g>
<path d="M1507.600 204V150" stroke="#6aa8e8" stroke-width="1.300"/>
<path d="M1507.600 204L1549.500 180.600" stroke="#f06060" stroke-width="1.300"/>
<path d="M1507.600 204L1465.500 180.600" stroke="#30c060" stroke-width="1.300"/>
<g font-family="Liberation Sans,sans-serif" font-weight="bold" font-size="10" font-style="italic" text-anchor="middle">
<text x="1508" y="152" fill="#4aa0f0" transform="rotate(12 1508 148)">z</text>
<text x="1556" y="180" fill="#f05050" transform="rotate(20 1556 177)">x</text>
<text x="1459.500" y="178" fill="#30c060" transform="rotate(-20 1459.500 175)">y</text>
</g>
</svg>
<div class="abs" style="left:1048px;top:187px;width:59px;height:24px;border:1px solid #444;border-radius:3px;background:#fff;font-size:13px;line-height:22px;color:#333;padding-left:7px">Menu<div class="abs" style="left:46px;top:9px;border:4px solid transparent;border-top:4px solid #333;border-bottom:0"></div></div>
<div class="abs" style="left:6px;top:136px;width:310px;height:163px;border:1px solid #555;border-radius:7px;background:#fff;overflow:hidden">
<div class="abs" style="left:0;top:0;width:308px;height:26px;background:#333;color:#fff;font-size:13px;line-height:26px;padding-left:6px;white-space:nowrap">Ruvidità della superficie</div>
<svg class="abs" style="left:285px;top:5px" width="17" height="17" viewBox="0 0 17 17"><path d="M1.500 1.500l14 14M15.500 1.500l-14 14" stroke="#fff" stroke-width="1.100"/></svg>
<div class="abs" style="left:30px;top:44px;font-size:13px;line-height:15px;color:#444">Tipo</div>
<div class="abs" style="left:30px;top:71px;font-size:13px;line-height:15px;color:#444">Valore</div>
<div class="abs" style="left:34px;top:110px;width:111px;height:36px;border:1px solid #ccc;border-radius:3px;background:linear-gradient(#fff,#f0f0f0);font-size:13px;line-height:34px;text-align:center;color:#333">Aggiorna</div>
<div class="abs" style="left:162px;top:32px;width:124px;height:116px;border:6px solid #f00"></div>
<div class="abs" style="left:174px;top:42px;width:100px;height:19px;border:1px solid #9a9a9a;border-radius:3px;background:linear-gradient(#fff,#f1f1f1);font-size:13px;line-height:17px;color:#222;padding-left:4px">Ra</div>
<svg class="abs" style="left:260px;top:48px" width="11" height="8" viewBox="0 0 11 8"><path d="M1.800 1.800l3.700 3.700 3.700-3.700" fill="none" stroke="#222" stroke-width="1.800" stroke-linecap="round" stroke-linejoin="round"/></svg>
<div class="abs" style="left:174px;top:69px;width:100px;height:19px;border:1px solid #b9c6ee;border-radius:3px;background:linear-gradient(#fff,#f4f4f4);font-size:13px;line-height:17px;color:#a0a0a0;padding-left:4px">6.3</div>
<svg class="abs" style="left:260px;top:75px" width="11" height="8" viewBox="0 0 11 8"><path d="M1.800 1.800l3.700 3.700 3.700-3.700" fill="none" stroke="#999" stroke-width="1.800" stroke-linecap="round" stroke-linejoin="round"/></svg>
<div class="abs" style="left:273px;top:137px;width:1px;height:6px;background:#aaa"></div>
<div class="abs" style="left:174px;top:88px;width:100px;height:50px;border:1px solid #333;background:#fff">
<div class="abs" style="left:0;top:0;width:98px;height:24px;font-size:13px;line-height:24px;color:#222;padding-left:4px">3.2</div>
<div class="abs" style="left:0;top:24px;width:98px;height:24px;background:#1967d2;font-size:13px;line-height:24px;color:#fff;padding-left:4px">6.3</div>
</div>
</div>
<div class="info" style="top:723px">Ruvidità della superficie Ra6.3<a style="margin-left:20px">Controllare la pagina seguente per informazioni dettagliate sui materiali.</a><svg width="13" height="13" viewBox="0 0 13 13" style="vertical-align:-2px;margin-left:6px"><path d="M5.500 2.500H2v8.500h8.500V7.500M7.500 1.500h4v4M11.300 1.700L6 7" fill="none" stroke="#1a44a8" stroke-width="1.600"/></svg></div>
<div class="info" style="top:744px">Le intersezioni sono rifinite con C/R da 0,1 a 0,4 mm. *per i modelli con C/R inferiore a 0,5</div>
<div class="info" style="top:765px">Se il modello non presenta una scanalatura di spaziatura, le intersezioni cilindriche sono rifinite con R0~R0,4 *se il modello è R0,5 o inferiore</div>
<div class="info" style="top:786px">Una scanalatura di sfiato opzionale è impostata nell'intersezione cilindrica in cui sono specificati il trattamento termico e la tolleranza del diametro.</div>
<div class="info" style="top:807px">JIS B 0405 Tolleranza media per dimensioni del modello esclusi gli smussi</div>
<div class="info" style="top:828px">Per altre tolleranze standard (concentricità, parallelismo, quadratura, ecc.), <a>fare riferimento alla pagina Informazioni tecniche.</a><svg width="13" height="13" viewBox="0 0 13 13" style="vertical-align:-2px;margin-left:6px"><path d="M5.500 2.500H2v8.500h8.500V7.500M7.500 1.500h4v4M11.300 1.700L6 7" fill="none" stroke="#1a44a8" stroke-width="1.600"/></svg></div>
<div class="abs" style="left:970px;top:806.5px;width:15px;height:15px;border-radius:50%;background:#2b2b2b;color:#fff;font-size:11px;font-weight:bold;line-height:15px;text-align:center">?</div>
<div class="abs" style="left:989px;top:806px;font-size:13px;line-height:15px;color:#666;white-space:nowrap">About icons</div>
<div class="abs" style="left:970px;top:827.5px;width:15px;height:15px;border-radius:50%;background:#2b2b2b;color:#fff;font-size:11px;font-weight:bold;line-height:15px;text-align:center">?</div>
<div class="abs" style="left:989px;top:827px;font-size:13px;line-height:15px;color:#666;white-space:nowrap">Colori dei modelli 3D</div>
<!--MAIN3-->
</div>
<div class="abs" style="left:1px;top:37px;width:471px;height:1px;background:#939393"></div><div class="abs" style="left:471px;top:37px;width:1127px;height:1px;background:#b9b9b9"></div>
<div id="edgeR"></div><div id="edgeR2"></div>
<div id="edgeB"></div>
</body>
</html>
